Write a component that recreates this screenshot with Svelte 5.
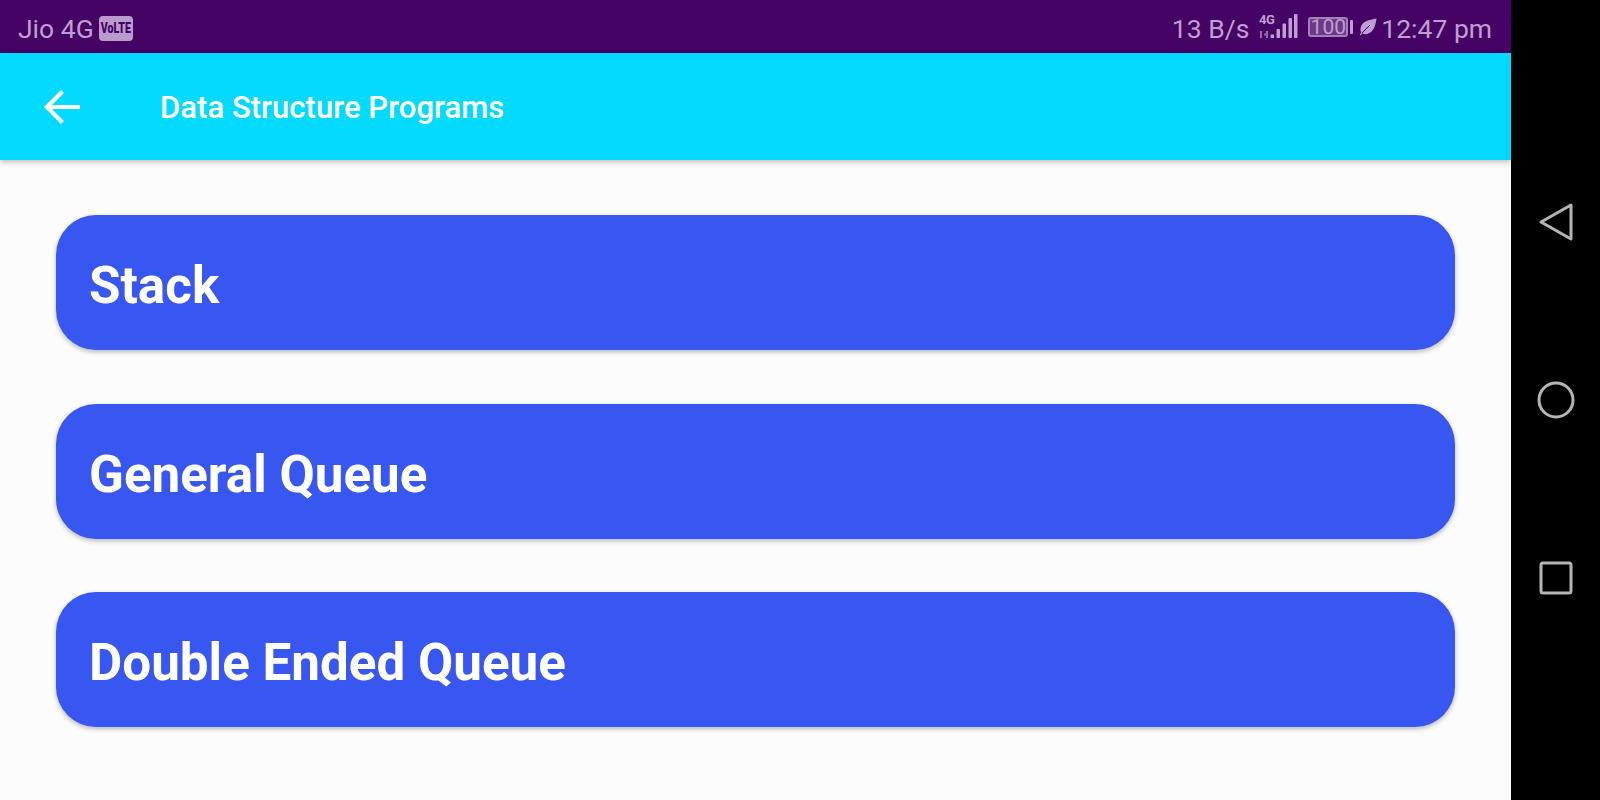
<script lang="ts">
	const items = ['Stack', 'General Queue', 'Double Ended Queue'];
</script>

<div class="device">
	<div class="screen">
		<header class="status-bar">
			<div class="status-left">
				<span class="label">Jio 4G</span>
				<span class="volte"><span class="volte-text">VoLTE</span></span>
			</div>
			<div class="status-right">
				<span class="label">13 B/s</span>
				<svg class="signal" width="40" height="32" viewBox="0 -2 40 32" aria-hidden="true">
					<text x="1" y="11" class="net">4G</text>
					<path d="M3 18v7M9 18v7M6 21.500h3" stroke="currentColor" stroke-width="2" fill="none" opacity=".65" />
					<rect x="12.500" y="21.500" width="3.500" height="3.500" fill="currentColor" />
					<rect x="18.500" y="16" width="3.500" height="9" rx="1" fill="currentColor" />
					<rect x="24.500" y="10.500" width="3.500" height="14.500" rx="1" fill="currentColor" />
					<rect x="30.500" y="5" width="3.500" height="20" rx="1" fill="currentColor" />
					<rect x="36" y="1" width="3.500" height="24" rx="1" fill="currentColor" />
				</svg>
				<div class="battery">
					<span class="battery-body">100</span>
					<span class="battery-tip"></span>
				</div>
				<svg class="leaf" width="18" height="18" viewBox="0 0 18 18" aria-hidden="true">
					<path d="M17.500 .5C10 2 2.500 3 1.500 10.500c-.2 1.500 0 2.800.7 3.800L.8 17l1 .6 1.400-2.300C5 16.500 7.500 16.500 10 15.300 15 13 16.500 7 17.500 .5z" fill="currentColor" />
					<path d="M3 15 11 7" stroke="#450365" stroke-width="1" fill="none" />
				</svg>
				<span class="label">12:47 pm</span>
			</div>
		</header>

		<div class="app-bar">
			<svg class="back" width="40" height="40" viewBox="0 0 40 40" aria-hidden="true">
				<path d="M38 20H6M20.500 4.500 5 20l15.500 15.500" fill="none" stroke="#fff" stroke-width="4.200" />
			</svg>
			<h1>Data Structure Programs</h1>
		</div>

		<main class="list">
			{#each items as item}
				<button class="card">{item}</button>
			{/each}
		</main>
	</div>

	<nav class="nav-bar" aria-label="System navigation">
		<svg width="36" height="40" viewBox="0 0 36 40" aria-hidden="true">
			<path d="M3 20 33 3v34z" fill="none" stroke="#b5b5b5" stroke-width="3" stroke-linejoin="round" />
		</svg>
		<svg width="38" height="38" viewBox="0 0 38 38" aria-hidden="true">
			<circle cx="19" cy="19" r="17" fill="none" stroke="#b5b5b5" stroke-width="3" />
		</svg>
		<svg class="recents" width="34" height="34" viewBox="0 0 34 34" aria-hidden="true">
			<rect x="2" y="2" width="30" height="30" rx="2" fill="none" stroke="#b5b5b5" stroke-width="3" />
		</svg>
	</nav>
</div>

<style>
	:global(body) {
		margin: 0;
		background: #000;
	}

	.device {
		display: flex;
		width: 1600px;
		height: 800px;
		overflow: hidden;
		font-family: Roboto, "Liberation Sans", sans-serif;
	}

	.screen {
		display: flex;
		flex-direction: column;
		width: 1511px;
		background: #fcfcfc;
	}

	.status-bar {
		display: flex;
		align-items: center;
		justify-content: space-between;
		height: 53px;
		padding: 0 19px 0 18px;
		box-sizing: border-box;
		background: #450365;
		color: #c09ed2;
		font-size: 26.500px;
	}

	.status-left,
	.status-right {
		display: flex;
		align-items: center;
	}

	.status-left {
		gap: 5px;
	}

	.label {
		margin-top: 3px;
		white-space: nowrap;
	}

	.volte {
		display: flex;
		justify-content: center;
		width: 34px;
		height: 25px;
		margin-top: 3px;
		border-radius: 4px;
		background: #bb9acd;
		color: #450365;
		font-size: 14px;
		line-height: 25px;
		font-weight: 900;
	}

	.volte-text {
		display: block;
		flex: none;
		transform: scaleX(0.76);
	}

	.signal {
		margin-left: 9px;
	}

	.net {
		font-size: 13px;
		font-weight: 700;
		letter-spacing: -0.5px;
		fill: currentColor;
	}

	.battery {
		display: flex;
		align-items: center;
		gap: 2px;
		margin-left: 10px;
	}

	.battery-body {
		display: block;
		width: 40px;
		height: 20px;
		box-sizing: border-box;
		border: 2px solid #a47fba;
		border-radius: 3px;
		background: #6a3a86;
		font-size: 21px;
		line-height: 16px;
		text-align: center;
	}

	.battery-tip {
		display: block;
		width: 3px;
		height: 14px;
		border-radius: 1px;
		background: #c09ed2;
	}

	.leaf {
		margin: 0 4px 0 6px;
	}

	.app-bar {
		display: flex;
		align-items: center;
		flex: none;
		height: 107px;
		position: relative;
		background: #03dafd;
		box-shadow: 0 2px 6px rgba(0, 0, 0, 0.25);
	}

	.back {
		flex: none;
		margin-left: 42px;
	}

	h1 {
		margin: 2px 0 0 78px;
		color: #fff;
		font-size: 31.100px;
		font-weight: 500;
	}

	.list {
		display: flex;
		flex-direction: column;
		gap: 53.500px;
		padding: 55px 56px 0;
	}

	.card {
		display: block;
		width: 100%;
		height: 135px;
		padding: 6px 0 0 33px;
		border: 0;
		border-radius: 40px;
		background: #3856f0;
		box-shadow: 0 2px 5px rgba(0, 0, 0, 0.28);
		color: #fff;
		font-family: inherit;
		font-size: 51.200px;
		font-weight: 700;
		text-align: left;
	}

	.nav-bar {
		display: flex;
		flex: none;
		flex-direction: column;
		align-items: center;
		gap: 139px;
		width: 89px;
		padding-top: 202px;
		background: #000;
	}

	.recents {
		margin-top: 3px;
	}
</style>
